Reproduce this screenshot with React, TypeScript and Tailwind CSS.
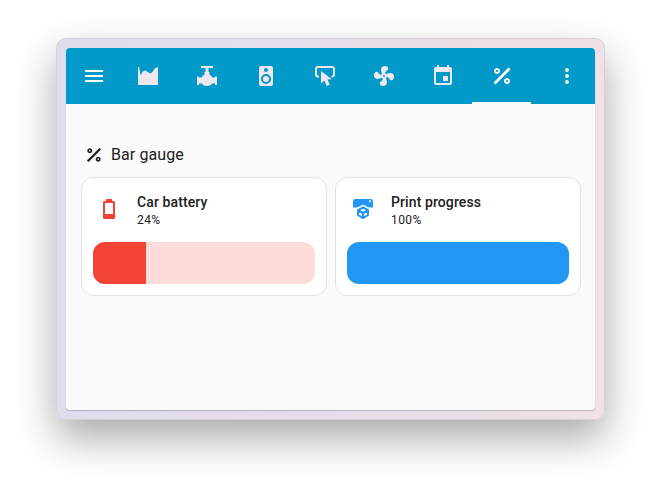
const paths = {
  menu: 'M3,6H21V8H3V6M3,11H21V13H3V11M3,16H21V18H3V16Z',
  area: 'M2 3H3.2L4.6 11.5C5.6 9 7 6.6 9 6.5C11 6.8 12.6 9.6 14.5 9.2C16.5 8.8 18 5.2 19.5 4L22 3V21H2Z',
  valve:
    'M6 2H18V4H13.5V8H14.5V10.8C15.8 11.3 16.6 12.2 17.2 13.5H20V12.5H22V21H20V19.5H17C16.2 21.3 14.4 22 12 22C9.6 22 7.8 21.3 7 19.5H4V21H2V12.5H4V13.5H6.8C7.4 12.2 8.2 11.3 9.5 10.8V8H10.5V4H6Z',
  speaker:
    'M12,12A3,3 0 0,0 9,15A3,3 0 0,0 12,18A3,3 0 0,0 15,15A3,3 0 0,0 12,12M12,20A5,5 0 0,1 7,15A5,5 0 0,1 12,10A5,5 0 0,1 17,15A5,5 0 0,1 12,20M12,4A2,2 0 0,1 14,6A2,2 0 0,1 12,8C10.89,8 10,7.1 10,6C10,4.89 10.89,4 12,4M17,2H7C5.89,2 5,2.89 5,4V20A2,2 0 0,0 7,22H17A2,2 0 0,0 19,20V4C19,2.89 18.1,2 17,2Z',
  fan: 'M12,11A1,1 0 0,0 11,12A1,1 0 0,0 12,13A1,1 0 0,0 13,12A1,1 0 0,0 12,11M12.5,2C17,2 17.11,5.57 14.75,6.75C13.76,7.24 13.32,8.29 13.13,9.22C13.61,9.42 14.03,9.73 14.35,10.13C18.05,8.13 22.03,8.92 22.03,12.5C22.03,17 18.46,17.1 17.28,14.73C16.78,13.74 15.72,13.3 14.79,13.11C14.59,13.59 14.28,14 13.88,14.34C15.87,18.03 15.08,22 11.5,22C7,22 6.91,18.42 9.27,17.24C10.25,16.75 10.69,15.71 10.89,14.79C10.4,14.59 9.97,14.27 9.65,13.87C5.96,15.85 2,15.07 2,11.5C2,7 5.56,6.89 6.74,9.26C7.24,10.25 8.29,10.68 9.22,10.87C9.41,10.39 9.73,9.97 10.14,9.65C8.15,5.96 8.94,2 12.5,2Z',
  event:
    'M17 12H12V17H17V12M16 1V3H8V1H6V3H5C3.89 3 3.01 3.9 3.01 5L3 19C3 20.1 3.89 21 5 21H19C20.1 21 21 20.1 21 19V5C21 3.9 20.1 3 19 3H18V1H16M19 19H5V8H19V19Z',
  percent:
    'M18.5 3.5L20.5 5.5L5.5 20.5L3.5 18.5L18.5 3.5M7 4C8.66 4 10 5.34 10 7C10 8.66 8.66 10 7 10C5.34 10 4 8.66 4 7C4 5.34 5.34 4 7 4M17 14C18.66 14 20 15.34 20 17C20 18.66 18.66 20 17 20C15.34 20 14 18.66 14 17C14 15.34 15.34 14 17 14M7 6C6.45 6 6 6.45 6 7C6 7.55 6.45 8 7 8C7.55 8 8 7.55 8 7C8 6.45 7.55 6 7 6M17 16C16.45 16 16 16.45 16 17C16 17.55 16.45 18 17 18C17.55 18 18 17.55 18 17C18 16.45 17.55 16 17 16Z',
  dots: 'M12,16A2,2 0 0,1 14,18A2,2 0 0,1 12,20A2,2 0 0,1 10,18A2,2 0 0,1 12,16M12,10A2,2 0 0,1 14,12A2,2 0 0,1 12,14A2,2 0 0,1 10,12A2,2 0 0,1 12,10M12,4A2,2 0 0,1 14,6A2,2 0 0,1 12,8A2,2 0 0,1 10,6A2,2 0 0,1 12,4Z',
  battery:
    'M16,17H8V6H16M16.67,4H15V2H9V4H7.33A1.33,1.33 0 0,0 6,5.33V20.67C6,21.4 6.6,22 7.33,22H16.67A1.33,1.33 0 0,0 18,20.67V5.33C18,4.6 17.4,4 16.67,4Z',
};

const Icon = ({ d, className }: { d: string; className?: string }) => (
  <svg viewBox="0 0 24 24" className={className} fill="currentColor">
    <path d={d} fillRule="evenodd" />
  </svg>
);

const CursorIcon = ({ className }: { className?: string }) => (
  <svg viewBox="0 0 24 24" className={className} fill="currentColor">
    <path
      d="M6 12.5H5A2 2 0 0 1 3 10.5V5A2 2 0 0 1 5 3H19A2 2 0 0 1 21 5V10.5A2 2 0 0 1 19 12.5H18.5"
      fill="none"
      stroke="currentColor"
      strokeWidth="2"
    />
    <path d="M8 7V19.5L11.3 16.6L13.6 22L16.8 20.7L14.4 15.5L18.8 15.2Z" />
  </svg>
);

const PrinterIcon = ({ className }: { className?: string }) => (
  <svg viewBox="0 0 24 24" className={className} fill="currentColor">
    <path d="M4.5 2H19.5A2.5 2.5 0 0 1 22 4.5V10.5H2V4.5A2.5 2.5 0 0 1 4.5 2Z" />
    <circle cx="19" cy="4.3" r="1" fill="#ffffff" />
    <path d="M12 7.5L19.5 11.5V19L12 23.5L4.5 19V11.5Z" fill="#ffffff" />
    <path
      d="M12 10.5L17 13.2V18L12 21L7 18V13.2ZM7.3 13.5L12 16L16.7 13.5M12 16V21"
      fill="none"
      stroke="currentColor"
      strokeWidth="2"
    />
  </svg>
);

const navIcons = [paths.area, paths.valve, paths.speaker, null, paths.fan, paths.event];

const GaugeCard = ({
  name,
  value,
  percent,
  icon,
  fill,
  track,
}: {
  name: string;
  value: string;
  percent: number;
  icon: React.ReactNode;
  fill: string;
  track: string;
}) => (
  <div className="h-[119px] rounded-xl border border-[#e6e0e6] bg-white p-[11px]">
    <div className="flex h-[53px] items-start">
      <div className="ml-1 mt-2 w-6 shrink-0">{icon}</div>
      <div className="ml-4 mt-[3px] text-[#212121]">
        <div className="text-sm leading-5 font-medium tracking-[0.1px]">{name}</div>
        <div className="text-xs leading-4 tracking-[0.4px]">{value}</div>
      </div>
    </div>
    <div className={`h-[42px] overflow-hidden rounded-xl ${track}`}>
      <div className={`h-full ${fill}`} style={{ width: `${percent}%` }} />
    </div>
  </div>
);

export default function App() {
  return (
    <div className="h-[494px] w-[661px] overflow-hidden bg-white pl-[56px] pt-[38px] font-['Roboto',sans-serif]">
      <div className="h-[382px] w-[549px] rounded-[10px] border border-[#d3d1d6] bg-gradient-to-r from-[#dfdcee] to-[#efe1e5] p-[9px] shadow-[0_18px_40px_rgba(0,0,0,0.34)]">
        <div className="h-full overflow-hidden rounded bg-[#fafafa] shadow-[0_1px_1px_rgba(100,110,140,0.4)]">
          <header className="flex h-14 bg-[#0099c8]">
            <div className="flex w-[52px] items-center justify-end pr-3">
              <Icon d={paths.menu} className="h-6 w-6 text-white" />
            </div>
            {navIcons.map((d, i) => (
              <div key={i} className="flex w-[59px] items-center justify-center">
                {d ? (
                  <Icon d={d} className="h-6 w-6 text-[#ede7ef]" />
                ) : (
                  <CursorIcon className="h-6 w-6 text-[#ede7ef]" />
                )}
              </div>
            ))}
            <div className="flex w-[59px] items-center justify-center border-b-2 border-white pt-[2px]">
              <Icon d={paths.percent} className="h-6 w-6 text-white" />
            </div>
            <div className="flex flex-1 items-center justify-center pl-2">
              <Icon d={paths.dots} className="h-6 w-6 text-[#f5f1f6]" />
            </div>
          </header>
          <main className="pl-[15px] pr-[14px] pt-[39px]">
            <div className="mb-[10px] flex h-6 items-center text-[#212121]">
              <Icon d={paths.percent} className="ml-[3px] h-5 w-5" />
              <span className="ml-[7px] text-base tracking-[0.1px]">Bar gauge</span>
            </div>
            <div className="grid grid-cols-2 gap-2">
              <GaugeCard
                name="Car battery"
                value="24%"
                percent={24}
                icon={<Icon d={paths.battery} className="h-6 w-6 text-[#f44336]" />}
                fill="bg-[#f44336]"
                track="bg-[#fddcd9]"
              />
              <GaugeCard
                name="Print progress"
                value="100%"
                percent={100}
                icon={<PrinterIcon className="h-6 w-6 text-[#2196f3]" />}
                fill="bg-[#2196f3]"
                track="bg-[#d3eafd]"
              />
            </div>
          </main>
        </div>
      </div>
    </div>
  );
}
